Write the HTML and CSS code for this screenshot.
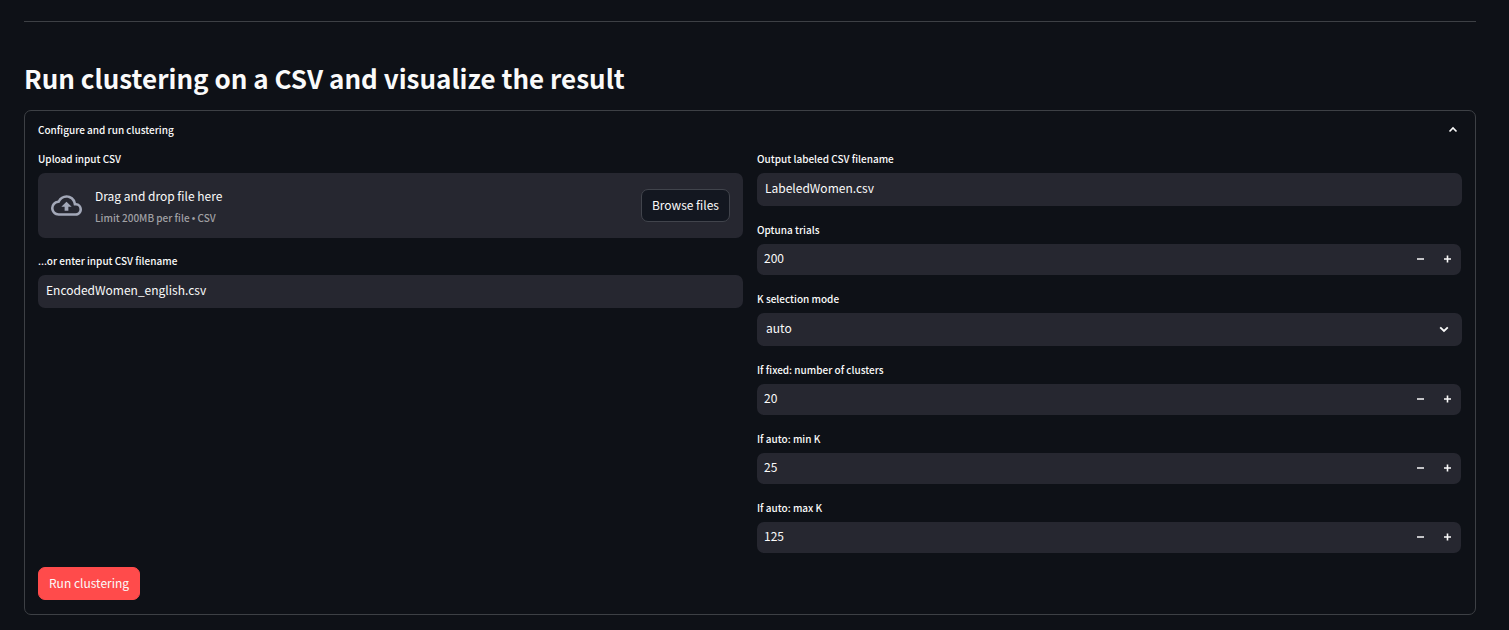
FILE: index.html
```html
<!DOCTYPE html>
<html lang="en">
<head>
<meta charset="utf-8">
<title>Run clustering</title>
<link rel="stylesheet" href="styles.css">
</head>
<body>
<main class="page">
  <hr class="divider">
  <h2 class="title">Run clustering on a CSV and visualize the result</h2>
  <section class="panel">
    <button class="panel-toggle" type="button" aria-expanded="true">
      <span>Configure and run clustering</span>
      <svg class="chevron" viewBox="0 0 16 16" aria-hidden="true"><path d="M4.500 9.500 8 6l3.500 3.500"/></svg>
    </button>
    <form class="form">
      <div class="columns">
        <div class="column column-input">
          <div class="group">
            <label class="label" for="upload">Upload input CSV</label>
            <div class="dropzone">
              <svg class="cloud" viewBox="0 0 24 24" aria-hidden="true"><path d="M19.35 10.04A7.49 7.49 0 0 0 12 4C9.11 4 6.6 5.64 5.35 8.04A5.994 5.994 0 0 0 0 14c0 3.31 2.69 6 6 6h13c2.76 0 5-2.24 5-5 0-2.64-2.05-4.78-4.65-4.96zM19 18H6c-2.21 0-4-1.79-4-4 0-2.05 1.53-3.76 3.56-3.97l1.07-.11.5-.95A5.469 5.469 0 0 1 12 6c2.62 0 4.88 1.86 5.39 4.43l.3 1.5 1.53.11A2.98 2.98 0 0 1 22 15c0 1.65-1.35 3-3 3zM8 13h2.55v3h2.9v-3H16l-4-4z"/></svg>
              <div class="drop-text">
                <span class="drop-main">Drag and drop file here</span>
                <span class="drop-note">Limit 200MB per file <span class="bullet">•</span> CSV</span>
              </div>
              <button class="button button-browse" id="upload" type="button">Browse files</button>
            </div>
          </div>
          <div class="group">
            <label class="label" for="input-name">...or enter input CSV filename</label>
            <input class="field" id="input-name" type="text" value="EncodedWomen_english.csv">
          </div>
        </div>
        <div class="column">
          <div class="group">
            <label class="label" for="output-name">Output labeled CSV filename</label>
            <input class="field" id="output-name" type="text" value="LabeledWomen.csv">
          </div>
          <div class="group">
            <label class="label" for="trials">Optuna trials</label>
            <div class="number">
              <input class="number-input" id="trials" type="number" value="200">
              <button class="step" type="button" aria-label="Decrease trials"><svg viewBox="0 0 8 8"><path d="M0 4h7"/></svg></button>
              <button class="step" type="button" aria-label="Increase trials"><svg viewBox="0 0 8 8"><path d="M0 4h7M3.500 .5v7"/></svg></button>
            </div>
          </div>
          <div class="group">
            <label class="label" for="mode">K selection mode</label>
            <div class="select-box">
              <select class="select" id="mode"><option>auto</option><option>fixed</option></select>
              <svg class="chevron chevron-down" viewBox="0 0 16 16" aria-hidden="true"><path d="M4.200 5.300 8 9l3.800-3.700"/></svg>
            </div>
          </div>
          <div class="group">
            <label class="label" for="clusters">If fixed: number of clusters</label>
            <div class="number">
              <input class="number-input" id="clusters" type="number" value="20">
              <button class="step" type="button" aria-label="Decrease clusters"><svg viewBox="0 0 8 8"><path d="M0 4h7"/></svg></button>
              <button class="step" type="button" aria-label="Increase clusters"><svg viewBox="0 0 8 8"><path d="M0 4h7M3.500 .5v7"/></svg></button>
            </div>
          </div>
          <div class="group">
            <label class="label" for="min-k">If auto: min K</label>
            <div class="number">
              <input class="number-input" id="min-k" type="number" value="25">
              <button class="step" type="button" aria-label="Decrease min K"><svg viewBox="0 0 8 8"><path d="M0 4h7"/></svg></button>
              <button class="step" type="button" aria-label="Increase min K"><svg viewBox="0 0 8 8"><path d="M0 4h7M3.500 .5v7"/></svg></button>
            </div>
          </div>
          <div class="group">
            <label class="label" for="max-k">If auto: max K</label>
            <div class="number">
              <input class="number-input" id="max-k" type="number" value="125">
              <button class="step" type="button" aria-label="Decrease max K"><svg viewBox="0 0 8 8"><path d="M0 4h7"/></svg></button>
              <button class="step" type="button" aria-label="Increase max K"><svg viewBox="0 0 8 8"><path d="M0 4h7M3.500 .5v7"/></svg></button>
            </div>
          </div>
        </div>
      </div>
      <button class="button button-run" type="button">Run clustering</button>
    </form>
  </section>
</main>
</body>
</html>
```
FILE: styles.css
```css
* {
  box-sizing: border-box;
}

body {
  margin: 0;
  background: #0e1117;
  color: #fafafa;
  font-family: "Noto Sans CJK SC", "Noto Sans", sans-serif;
  font-size: 12px;
  line-height: 18px;
}

button,
input,
select {
  font: inherit;
  color: inherit;
}

.page {
  padding: 21px 33px 15px 24px;
}

.divider {
  height: 1px;
  margin: 0;
  border: 0;
  background: #3d4045;
}

.title {
  margin: 38px 0 14px;
  font-size: 26px;
  line-height: 36px;
  font-weight: 600;
}

.panel {
  border: 1px solid #3d4045;
  border-radius: 7px;
}

.panel-toggle {
  display: flex;
  align-items: center;
  justify-content: space-between;
  width: 100%;
  height: 38px;
  padding: 0 14px 1px 13px;
  border: 0;
  background: none;
  font-size: 10px;
  font-weight: 500;
  text-align: left;
}

.chevron {
  width: 16px;
  height: 16px;
  fill: none;
  stroke: #fafafa;
  stroke-width: 1.6;
}

.form {
  padding: 0 13px 14px;
}

.columns {
  display: grid;
  grid-template-columns: 1fr 1fr;
  gap: 14px;
  margin-bottom: 14px;
}

.column {
  display: flex;
  flex-direction: column;
  gap: 14px;
}

.column-input {
  gap: 13px;
}

.group {
  display: flex;
  flex-direction: column;
  gap: 5px;
}

.label {
  font-size: 10px;
  line-height: 19px;
  font-weight: 500;
}

.dropzone {
  display: flex;
  align-items: center;
  height: 65px;
  padding: 0 13px;
  border-radius: 7px;
  background: #262730;
}

.cloud {
  width: 31px;
  height: 31px;
  margin-right: 13px;
  fill: #a3a8b8;
}

.drop-text {
  display: flex;
  flex: 1;
  flex-direction: column;
  gap: 4px;
  padding-top: 3px;
}

.drop-note {
  font-size: 10px;
  font-weight: 500;
  color: #a0a0a4;
}

.bullet {
  font-family: "Liberation Sans", sans-serif;
}

.button {
  height: 33px;
  padding: 0 10px 2px;
  border: 1px solid #41444c;
  border-radius: 7px;
}

.button-browse {
  background: #131720;
}

.button-run {
  border-color: #ff4b4b;
  background: #ff4b4b;
}

.field,
.select,
.number {
  width: 100%;
  border: 0;
  border-radius: 7px;
  background: #262730;
}

.field,
.select {
  height: 33px;
  padding: 0 8px 4px;
}

.select-box {
  display: grid;
  align-items: center;
}

.select-box > * {
  grid-area: 1 / 1;
}

.select {
  padding: 0 9px 3px;
  appearance: none;
}

.chevron-down {
  justify-self: end;
  margin-right: 10px;
  stroke-width: 1.8;
  pointer-events: none;
}

.number {
  display: flex;
  width: auto;
  height: 31px;
  margin-right: 1px;
  overflow: hidden;
}

.number-input {
  flex: 1;
  min-width: 0;
  padding: 0 7px 3px;
  border: 0;
  background: none;
  appearance: textfield;
}

.number-input::-webkit-inner-spin-button {
  appearance: none;
}

.step {
  display: grid;
  place-items: center;
  width: 27px;
  padding: 0 0 1px;
  border: 0;
  background: none;
}

.step svg {
  width: 8px;
  height: 8px;
  stroke: #fafafa;
  stroke-width: 1.6;
}
```
